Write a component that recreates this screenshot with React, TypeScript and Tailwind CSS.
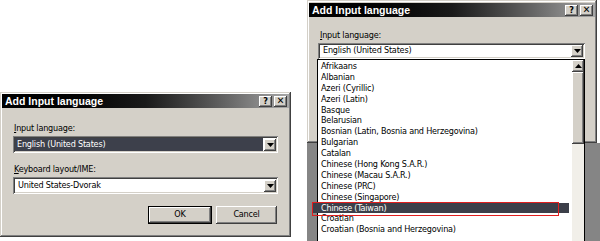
import React from "react";

const raised =
  "shadow-[inset_-1px_-1px_#404040,inset_1px_1px_#ffffff,inset_-2px_-2px_#808080,inset_2px_2px_#d4d0c8]";
const sunken =
  "shadow-[inset_1px_1px_#808080,inset_-1px_-1px_#ffffff,inset_2px_2px_#404040,inset_-2px_-2px_#d4d0c8]";
const frame =
  "shadow-[inset_-1px_-1px_#404040,inset_1px_1px_#d4d0c8,inset_-2px_-2px_#808080,inset_2px_2px_#ffffff]";

function DownBtn() {
  return (
    <div className={`w-[12px] h-[12px] shrink-0 bg-[#d4d0c8] ${raised} flex items-center justify-center`}>
      <svg width="7" height="4" viewBox="0 0 7 4">
        <polygon points="0,0 7,0 3.5,4" fill="#000" />
      </svg>
    </div>
  );
}

function UpBtn() {
  return (
    <div className={`w-[12px] h-[12px] shrink-0 bg-[#d4d0c8] ${raised} flex items-center justify-center`}>
      <svg width="7" height="4" viewBox="0 0 7 4">
        <polygon points="0,4 7,4 3.5,0" fill="#000" />
      </svg>
    </div>
  );
}

function TitleBar() {
  return (
    <div className="h-[14px] bg-linear-to-r from-[#000000] via-[#1a1a1a] to-[#a8a8a8] flex items-center justify-between pl-[3px] pr-[2px]">
      <span className="text-white font-bold text-[10.5px] tracking-[0px] leading-none font-['Liberation_Sans',Arial,sans-serif]">
        Add Input language
      </span>
      <div className="flex gap-[2px]">
        <div className={`w-[13px] h-[11px] bg-[#d4d0c8] ${raised} flex items-center justify-center text-[9px] font-bold leading-none tracking-[0px]`}>?</div>
        <div className={`w-[13px] h-[11px] bg-[#d4d0c8] ${raised} flex items-center justify-center text-[10px] font-bold leading-none tracking-[0px]`}>✕</div>
      </div>
    </div>
  );
}

const languages = [
  "Afrikaans",
  "Albanian",
  "Azeri (Cyrillic)",
  "Azeri (Latin)",
  "Basque",
  "Belarusian",
  "Bosnian (Latin, Bosnia and Herzegovina)",
  "Bulgarian",
  "Catalan",
  "Chinese (Hong Kong S.A.R.)",
  "Chinese (Macau S.A.R.)",
  "Chinese (PRC)",
  "Chinese (Singapore)",
  "Chinese (Taiwan)",
  "Croatian",
  "Croatian (Bosnia and Herzegovina)",
];

export default function App() {
  return (
    <div className="relative w-[600px] h-[241px] bg-white flex overflow-hidden font-['DejaVu_Sans_Condensed','Liberation_Sans',Arial,sans-serif] text-[9px] tracking-[-0.2px] text-black">
      {/* Left dialog */}
      <div className="w-[291px] shrink-0 pt-[92px]">
        <div className={`h-[145px] bg-[#d4d0c8] p-[2px] ${frame} flex flex-col`}>
          <TitleBar />
          <div className="flex flex-col px-[11px] pt-[14px]">
            <div className="h-[12px] leading-[12px] pl-[1px]">
              <span className="underline">I</span>nput language:
            </div>
            <div className={`mt-[2px] h-[17px] bg-white ${sunken} flex items-center p-[2px]`}>
              <div className="flex-1 h-full bg-[#3d404b] text-white flex items-center pl-[2px] mr-[1px]">
                English (United States)
              </div>
              <DownBtn />
            </div>
            <div className="mt-[10px] h-[12px] leading-[12px] pl-[1px]">
              <span className="underline">K</span>eyboard layout/IME:
            </div>
            <div className={`mt-[2px] h-[17px] bg-white ${sunken} flex items-center p-[2px]`}>
              <div className="flex-1 h-full flex items-center pl-[3px] mr-[1px]">United States-Dvorak</div>
              <DownBtn />
            </div>
            <div className="mt-[12px] flex justify-end gap-[4px] pr-[1px]">
              <div className="w-[64px] h-[18px] border border-black bg-[#d4d0c8]">
                <div className={`w-full h-full ${raised} flex items-center justify-center`}>OK</div>
              </div>
              <div className={`w-[61px] h-[18px] bg-[#d4d0c8] ${raised} flex items-center justify-center`}>Cancel</div>
            </div>
          </div>
        </div>
      </div>

      {/* Right side */}
      <div className="ml-[16px] w-[293px] shrink-0 flex flex-col">
        <div className={`relative z-10 w-[290px] h-[143px] shrink-0 bg-[#d4d0c8] p-[2px] ${frame} flex flex-col`}>
          <div className="pt-[1px]">
            <TitleBar />
          </div>
          <div className="flex flex-col pl-[9px] pr-[10px] pt-[12px]">
            <div className="h-[12px] leading-[12px] pl-[2px]">
              <span className="underline">I</span>nput language:
            </div>
            <div className={`mt-[2px] h-[16px] bg-white ${sunken} flex items-center p-[2px]`}>
              <div className="flex-1 h-full flex items-center pl-[3px] mr-[1px]">English (United States)</div>
              <DownBtn />
            </div>
            <div className="-ml-[1px] h-[190px] shrink-0 border border-black bg-white flex">
              <div className="flex-1 flex flex-col pt-[1px]">
                {languages.map((l) =>
                  l === "Chinese (Taiwan)" ? (
                    <div key={l} className="h-[10.9px] leading-[10.9px] -ml-[5px] mr-[3px] pl-[8px] bg-[#3c3f49] text-white whitespace-nowrap">
                      {l}
                    </div>
                  ) : (
                    <div key={l} className="h-[10.9px] leading-[10.9px] pl-[3px] whitespace-nowrap">
                      {l}
                    </div>
                  )
                )}
              </div>
              <div className="w-[12px] flex flex-col bg-[#f1efe9]">
                <UpBtn />
                <div className={`h-[72px] bg-[#d4d0c8] ${raised}`} />
              </div>
            </div>
          </div>
        </div>
        <div className="flex-1 bg-[#858585]" />
      </div>

      {/* Annotation box */}
      <div className="absolute z-20 left-[312px] top-[202px] w-[247px] h-[14px] border-[1.5px] border-[#e01e1e]" />
    </div>
  );
}
